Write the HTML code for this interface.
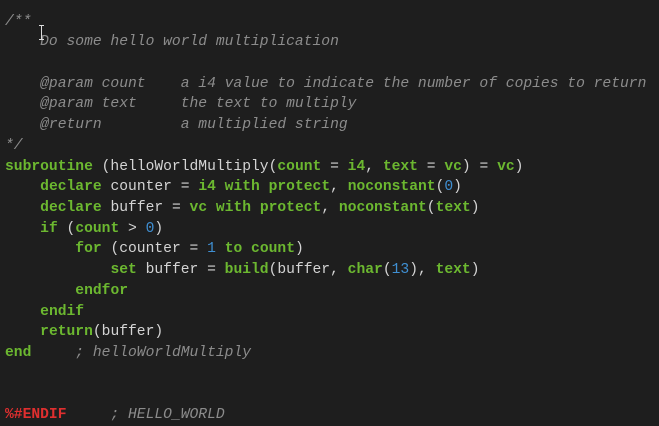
<!DOCTYPE html>
<html><head><style>
html,body{margin:0;padding:0;background:#1e1e1e;width:659px;height:425px;overflow:hidden}
pre{margin:0;position:absolute;left:5px;top:11.5px;font-family:"Liberation Mono","DejaVu Sans Mono",monospace;font-size:14.65px;line-height:20.72px;color:#d4d4d4}
.c{color:#8c8c8c;font-style:italic}
.k{color:#6cb830;font-weight:bold}
.n{color:#3f8fd2}
.r{color:#e02f2f;font-weight:bold}
.cur{position:absolute;left:41px;top:25px;width:1px;height:15px;background:#ddd}
.cur:before,.cur:after{content:"";position:absolute;left:-2px;width:5px;height:1px;background:#ddd}
.cur:before{top:0}.cur:after{bottom:0}
</style></head><body>
<pre><span class="c">/**
    Do some hello world multiplication

    @param count    a i4 value to indicate the number of copies to return
    @param text     the text to multiply
    @return         a multiplied string
*/</span>
<span class="k">subroutine</span> (helloWorldMultiply(<span class="k">count</span> = <span class="k">i4</span>, <span class="k">text</span> = <span class="k">vc</span>) = <span class="k">vc</span>)
    <span class="k">declare</span> counter = <span class="k">i4 with protect</span>, <span class="k">noconstant</span>(<span class="n">0</span>)
    <span class="k">declare</span> buffer = <span class="k">vc with protect</span>, <span class="k">noconstant</span>(<span class="k">text</span>)
    <span class="k">if</span> (<span class="k">count</span> &gt; <span class="n">0</span>)
        <span class="k">for</span> (counter = <span class="n">1</span> <span class="k">to count</span>)
            <span class="k">set</span> buffer = <span class="k">build</span>(buffer, <span class="k">char</span>(<span class="n">13</span>), <span class="k">text</span>)
        <span class="k">endfor</span>
    <span class="k">endif</span>
    <span class="k">return</span>(buffer)
<span class="k">end</span>     <span class="c">; helloWorldMultiply</span>


<span class="r">%#ENDIF</span>     <span class="c">; HELLO_WORLD</span></pre>
<div class="cur"></div>
</body></html>
